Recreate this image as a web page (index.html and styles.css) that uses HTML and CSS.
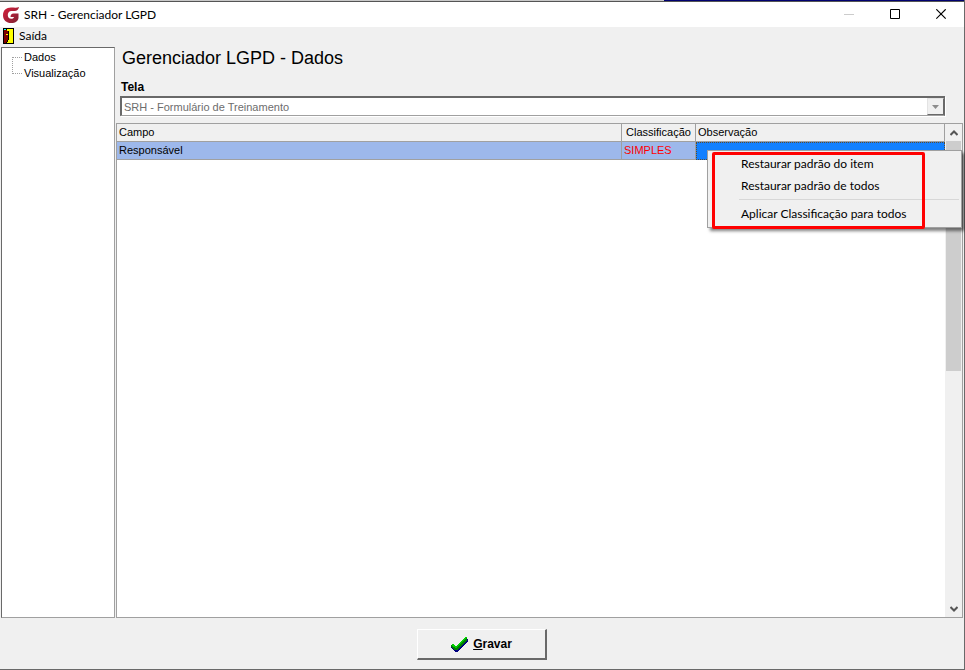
FILE: index.html
```html
<!DOCTYPE html>
<html lang="pt-BR">
<head>
<meta charset="utf-8">
<title>SRH - Gerenciador LGPD</title>
<link rel="stylesheet" href="styles.css">
</head>
<body>
<div class="window">
  <header class="titlebar">
    <svg class="logo" viewBox="0 0 16 16" aria-hidden="true">
      <defs><linearGradient id="g" x1="0" y1="0" x2="1" y2="1"><stop offset="0" stop-color="#d81f3c"/><stop offset="1" stop-color="#7d2233"/></linearGradient></defs>
      <path d="M16 0C15.500 2.500 14 4 11.500 4H8.500C6 4 4.800 5.800 4.800 8S6 11.800 8.300 11.800C9.800 11.800 10.800 11.200 11 10H7.500C7.500 8 8.500 6.500 10.500 6.500H15.500V10.500C15.500 14 12.500 16 8.300 16 3.300 16 0 13 0 8.200S3.300 .6 8 .6C11 .6 14 1.200 16 0Z" fill="url(#g)"/>
    </svg>
    <span class="title">SRH - Gerenciador LGPD</span>
    <div class="controls">
      <button class="control" aria-label="Minimizar" disabled><svg viewBox="0 0 11 11"><path d="M0 5.500H10" stroke="#ccc"/></svg></button>
      <button class="control" aria-label="Maximizar"><svg viewBox="0 0 11 11"><path d="M.5 .5H9.500V9.500H.5Z" fill="none" stroke="#000"/></svg></button>
      <button class="control" aria-label="Fechar"><svg viewBox="0 0 11 11"><path d="M.3 .3 9.700 9.700M9.700 .3 .3 9.700" stroke="#000" stroke-width="1.200"/></svg></button>
    </div>
  </header>
  <nav class="menubar">
    <button class="menu-item">
      <svg class="door" viewBox="0 0 11 16" shape-rendering="crispEdges" aria-hidden="true">
        <path d="M0 0H11V16H0Z" fill="#000"/><path d="M4 1H10V15H4Z" fill="#ff0"/><path d="M1 1H3V2H4V3H5V12H4V14H3V15H1Z" fill="#800000"/><path d="M1 1H3V2H1Z" fill="#0ff"/><path d="M3 6H5V7H3Z" fill="#ff0"/><path d="M5 3H6V12H5V14H4V12H5Z" fill="#000"/>
      </svg>
      <span>Saída</span>
    </button>
  </nav>
  <div class="workspace">
    <aside class="tree">
      <ul>
        <li><a href="#dados">Dados</a></li>
        <li><a href="#visualizacao">Visualização</a></li>
      </ul>
    </aside>
    <main class="content">
      <h1>Gerenciador LGPD - Dados</h1>
      <label class="field-label" for="tela">Tela</label>
      <div class="combo">
        <select id="tela" disabled><option>SRH - Formulário de Treinamento</option></select>
        <span class="combo-arrow" aria-hidden="true"><svg viewBox="0 0 7 4"><path d="M0 0H7L3.500 4Z" fill="#8c8c8c"/></svg></span>
      </div>
      <div class="grid">
        <div class="grid-body">
          <table>
            <colgroup><col><col class="col-class"><col class="col-obs"></colgroup>
            <thead><tr><th>Campo</th><th class="center">Classificação</th><th>Observação</th></tr></thead>
            <tbody><tr><td>Responsável</td><td class="level">SIMPLES</td><td class="focused"></td></tr></tbody>
          </table>
          <div class="context-menu">
            <button>Restaurar padrão do item</button>
            <button>Restaurar padrão de todos</button>
            <hr>
            <button>Aplicar Classificação para todos</button>
            <span class="highlight" aria-hidden="true"></span>
          </div>
        </div>
        <div class="scrollbar" aria-hidden="true">
          <svg viewBox="0 0 8 6"><path d="M.5 5 4 1.500 7.500 5" fill="none" stroke="#555" stroke-width="2"/></svg>
          <div class="track"><div class="thumb"></div></div>
          <svg viewBox="0 0 8 6"><path d="M.5 1 4 4.500 7.500 1" fill="none" stroke="#555" stroke-width="2"/></svg>
        </div>
      </div>
    </main>
  </div>
  <footer class="actions">
    <button class="save">
      <svg viewBox="0 0 17 15" shape-rendering="crispEdges" aria-hidden="true">
        <path d="M0 9 3 9 5 11 14 2 17 2V4L6 15H4L0 11Z" fill="#000080"/>
        <path d="M0 8 2 7 5 9 14 0H16V3L6 13H4L0 10Z" fill="#008000"/>
        <path d="M0 8 2 7 5 10 14 0H16V1H15L5 11Z" fill="#00d000"/>
      </svg>
      <span><u>G</u>ravar</span>
    </button>
  </footer>
</div>
</body>
</html>
```
FILE: styles.css
```css
* { box-sizing: border-box; }
body {
  margin: 0;
  font: 11px/16px "Liberation Sans", Arial, sans-serif;
  color: #000;
  background: #f0f0f0;
}
button { font: inherit; color: inherit; border: 0; padding: 0; background: none; }
svg { display: block; }

.window {
  display: flex;
  flex-direction: column;
  min-height: 100vh;
  padding-top: 1px;
  background: linear-gradient(90deg, #c8c8c8 664px, #000070 664px) top / 100% 1px no-repeat;
  border: 1px solid #696969;
  border-width: 0 1px 1px 0;
}
.titlebar {
  display: flex;
  align-items: center;
  height: 26px;
  padding-left: 3px;
  gap: 5px;
  background: #fff;
  border-top: 1px solid #555;
}
.logo { width: 16px; height: 16px; }
.title, .menubar, .context-menu { font-family: Lato, "Segoe UI", sans-serif; font-size: 12px; }
.controls { display: flex; margin-left: auto; }
.control { display: grid; place-items: center; width: 46px; height: 24px; }
.control svg { width: 11px; height: 11px; }

.menubar { display: flex; height: 20px; padding-left: 3px; }
.menu-item { display: flex; align-items: center; gap: 5px; height: 18px; }
.door { width: 11px; height: 16px; }

.workspace { display: flex; flex: 1; gap: 1px; padding: 0 1px; }
.tree {
  width: 114px;
  flex: none;
  background: #fff;
  border: 1px solid #a0a0a0;
  border-top-color: #696969;
  border-left-color: #696969;
}
.tree ul { list-style: none; margin: 0 0 0 10px; padding: 1px 0 0; }
.tree li { position: relative; padding-left: 12px; }
.tree li::before {
  content: "";
  position: absolute;
  left: 0;
  top: 0;
  width: 9px;
  height: 8px;
  border-left: 1px dotted #a0a0a0;
  border-bottom: 1px dotted #a0a0a0;
}
.tree li:first-child::before { top: 8px; border-bottom: 0; border-top: 1px dotted #a0a0a0; }
.tree a { color: inherit; text-decoration: none; }

.content { display: flex; flex-direction: column; flex: 1; min-width: 0; }
h1 { margin: 0 0 10px 6px; font-size: 18px; line-height: 22px; font-weight: 400; }
.field-label { padding-left: 5px; font-weight: 700; font-size: 12px; line-height: 16px; }
.combo {
  display: flex;
  height: 20px;
  margin: 1px 18px 7px 4px;
  background: #fff;
  border: 2px solid #a0a0a0;
  border-top-color: #696969;
  border-left-color: #696969;
  border-right: 1px solid #696969;
  border-bottom: 1px solid #a0a0a0;
  box-shadow: 1px 1px #fff;
}
.combo select {
  flex: 1;
  appearance: none;
  border: 0;
  padding: 0 2px;
  font: inherit;
  line-height: 16px;
  color: #6d6d6d;
  background: #fff;
  opacity: 1;
}
.combo-arrow {
  display: grid;
  place-items: center;
  width: 17px;
  background: #f0f0f0;
  border: 1px solid #e3e3e3;
  border-right-color: #696969;
  border-bottom-color: #696969;
}
.combo-arrow svg { width: 7px; height: 4px; }

.grid { display: flex; flex: 1; background: #fff; border: 1px solid #a0a0a0; }
.grid-body { position: relative; flex: 1; min-width: 0; }
table { width: 100%; table-layout: fixed; border-collapse: separate; border-spacing: 0; }
.col-class { width: 74px; }
.col-obs { width: 249px; }
th, td {
  height: 18px;
  padding: 0 2px;
  line-height: 17px;
  font-weight: 400;
  text-align: left;
  border-right: 1px solid #a0a0a0;
  border-bottom: 1px solid #a0a0a0;
}
th { background: #f0f0f0; }
.center { text-align: center; }
td { background: #9db8eb; }
.level { color: #f00; }
.focused { background: #1280ff; border: 1px dotted #5a4a30; }

.context-menu {
  position: absolute;
  top: 26px;
  right: -17px;
  width: 255px;
  padding: 2px;
  background: #f0f0f0;
  border: 1px solid #a0a0a0;
  box-shadow: 3px 3px 3px rgba(0, 0, 0, .5);
}
.context-menu button { display: block; width: 100%; height: 22px; padding-left: 31px; text-align: left; }
.context-menu hr { margin: 2px 0 3px 29px; border: 0; border-top: 1px solid #d7d7d7; }
.highlight {
  position: absolute;
  inset: 1px 36px -2px 4px;
  border: 3px solid #f00;
  border-radius: 2px;
  pointer-events: none;
}
.scrollbar { display: flex; flex-direction: column; align-items: center; width: 17px; padding: 6px 0 5px; background: #f0f0f0; }
.scrollbar svg { width: 8px; height: 6px; }
.track { flex: 1; width: 15px; margin: 5px 0; }
.thumb { height: 50%; background: #cdcdcd; }

.actions { display: flex; justify-content: center; padding: 11px 0 9px; }
.save {
  display: flex;
  align-items: center;
  justify-content: center;
  gap: 5px;
  width: 130px;
  height: 31px;
  font-weight: 700;
  font-size: 12px;
  border: 1px solid #fff;
  border-right: 2px solid #696969;
  border-bottom: 2px solid #696969;
}
.save svg { width: 17px; height: 15px; }
```
